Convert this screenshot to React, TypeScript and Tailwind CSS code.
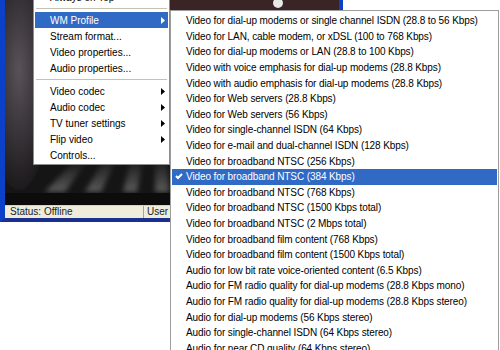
import React from "react"

const profiles = [
  "Video for dial-up modems or single channel ISDN (28.8 to 56 Kbps)",
  "Video for LAN, cable modem, or xDSL (100 to 768 Kbps)",
  "Video for dial-up modems or LAN (28.8 to 100 Kbps)",
  "Video with voice emphasis for dial-up modems (28.8 Kbps)",
  "Video with audio emphasis for dial-up modems (28.8 Kbps)",
  "Video for Web servers (28.8 Kbps)",
  "Video for Web servers (56 Kbps)",
  "Video for single-channel ISDN (64 Kbps)",
  "Video for e-mail and dual-channel ISDN (128 Kbps)",
  "Video for broadband NTSC (256 Kbps)",
  "Video for broadband NTSC (384 Kbps)",
  "Video for broadband NTSC (768 Kbps)",
  "Video for broadband NTSC (1500 Kbps total)",
  "Video for broadband NTSC (2 Mbps total)",
  "Video for broadband film content (768 Kbps)",
  "Video for broadband film content (1500 Kbps total)",
  "Audio for low bit rate voice-oriented content (6.5 Kbps)",
  "Audio for FM radio quality for dial-up modems (28.8 Kbps mono)",
  "Audio for FM radio quality for dial-up modems (28.8 Kbps stereo)",
  "Audio for dial-up modems (56 Kbps stereo)",
  "Audio for single-channel ISDN (64 Kbps stereo)",
  "Audio for near CD quality (64 Kbps stereo)",
]

const selected = "Video for broadband NTSC (384 Kbps)"

function Arrow() {
  return (
    <svg width="4" height="7" viewBox="0 0 4 7" className="shrink-0">
      <path d="M0 0L4 3.5L0 7Z" fill="currentColor" />
    </svg>
  )
}

function Check() {
  return (
    <svg width="8" height="7" viewBox="0 0 8 7">
      <path d="M1 3L3 5L7 1" fill="none" stroke="currentColor" strokeWidth="2" />
    </svg>
  )
}

function MenuRow({ label, arrow, active }: { label: string; arrow?: boolean; active?: boolean }) {
  return (
    <div
      className={
        active
          ? "flex h-4 items-center bg-[#316ac5] pl-[15px] pr-[3px] text-white"
          : "flex h-4 items-center pl-[15px] pr-[3px] text-black"
      }
    >
      <span className="flex-1 whitespace-nowrap">{label}</span>
      {arrow && <Arrow />}
    </div>
  )
}

function Separator() {
  return (
    <div className="flex h-[7px] items-center px-px">
      <div className="h-px w-full bg-[#c5c2b2]" />
    </div>
  )
}

// still frame of the playing video, only a sliver of it shows
function VideoFrame() {
  return (
    <svg width="334" height="205" viewBox="0 0 334 205" className="block">
      <defs>
        <radialGradient id="haze" cx="0.5" cy="0.5" r="0.5">
          <stop offset="0" stopColor="#5a525a" />
          <stop offset="1" stopColor="#1c1a1c" />
        </radialGradient>
        <linearGradient id="beam" x1="0" y1="1" x2="0" y2="0">
          <stop offset="0" stopColor="#777" stopOpacity="0.7" />
          <stop offset="1" stopColor="#777" stopOpacity="0" />
        </linearGradient>
        <filter id="soft">
          <feGaussianBlur stdDeviation="2.5" />
        </filter>
      </defs>
      <rect width="334" height="205" fill="#151515" />
      <ellipse cx="14" cy="70" rx="34" ry="120" fill="url(#haze)" />
      <rect x="165" y="0" width="169" height="12" fill="#3a2426" />
      <ellipse cx="273" cy="3" rx="5" ry="5" fill="#e8e8e8" />
      <g filter="url(#soft)">
        <path d="M40 192L70 160L82 160L60 192Z" fill="url(#beam)" />
        <path d="M80 192L100 158L112 158L96 192Z" fill="url(#beam)" />
        <path d="M118 192L126 158L138 158L132 192Z" fill="url(#beam)" />
        <path d="M150 192L150 158L162 158L164 192Z" fill="url(#beam)" />
      </g>
      <rect x="0" y="193" width="334" height="12" fill="#0c0c0c" />
    </svg>
  )
}

export default function App() {
  return (
    <div className="relative h-[350px] w-[500px] overflow-hidden bg-white font-['Liberation_Sans',Arial,sans-serif] text-[10px]">
      {/* player window behind the menus */}
      <div className="flex h-[222px] w-[343px] flex-col border-b-[4px] border-l-[5px] border-r-[4px] border-b-[#1a2f90] border-l-[#0b41c9] border-r-[#0b41c9]">
        <div className="flex-1 overflow-hidden bg-[#151515]">
          <VideoFrame />
        </div>
        <div className="flex h-[13px] items-center border-t border-[#d8d2bd] bg-[#efecdc] leading-[12px] text-[#222]">
          <span className="w-[138px] pl-[5px]">Status: Offline</span>
          <span className="h-full border-l border-[#a9a490] pl-[3px]">User</span>
        </div>
      </div>

      {/* context menu */}
      <div className="absolute left-[33px] top-[-14px] w-[137px] border border-[#8d8d8d] bg-white px-px pb-px pt-[2px]">
        <MenuRow label="Always on Top" />
        <Separator />
        <MenuRow label="WM Profile" arrow active />
        <MenuRow label="Stream format..." />
        <MenuRow label="Video properties..." />
        <MenuRow label="Audio properties..." />
        <Separator />
        <MenuRow label="Video codec" arrow />
        <MenuRow label="Audio codec" arrow />
        <MenuRow label="TV tuner settings" arrow />
        <MenuRow label="Flip video" arrow />
        <MenuRow label="Controls..." />
      </div>

      {/* WM Profile submenu */}
      <div className="absolute left-[170px] top-[10px] w-[329px] border border-[#9d9d9d] bg-white px-px pt-[2px] tracking-[-0.1px]">
        {profiles.map((p) => (
          <div
            key={p}
            className={
              p === selected
                ? "flex h-[15.6px] items-center bg-[#316ac5] text-white"
                : "flex h-[15.6px] items-center text-black"
            }
          >
            <span className="flex w-[14px] shrink-0 justify-center">{p === selected && <Check />}</span>
            <span className="whitespace-nowrap">{p}</span>
          </div>
        ))}
      </div>
    </div>
  )
}
